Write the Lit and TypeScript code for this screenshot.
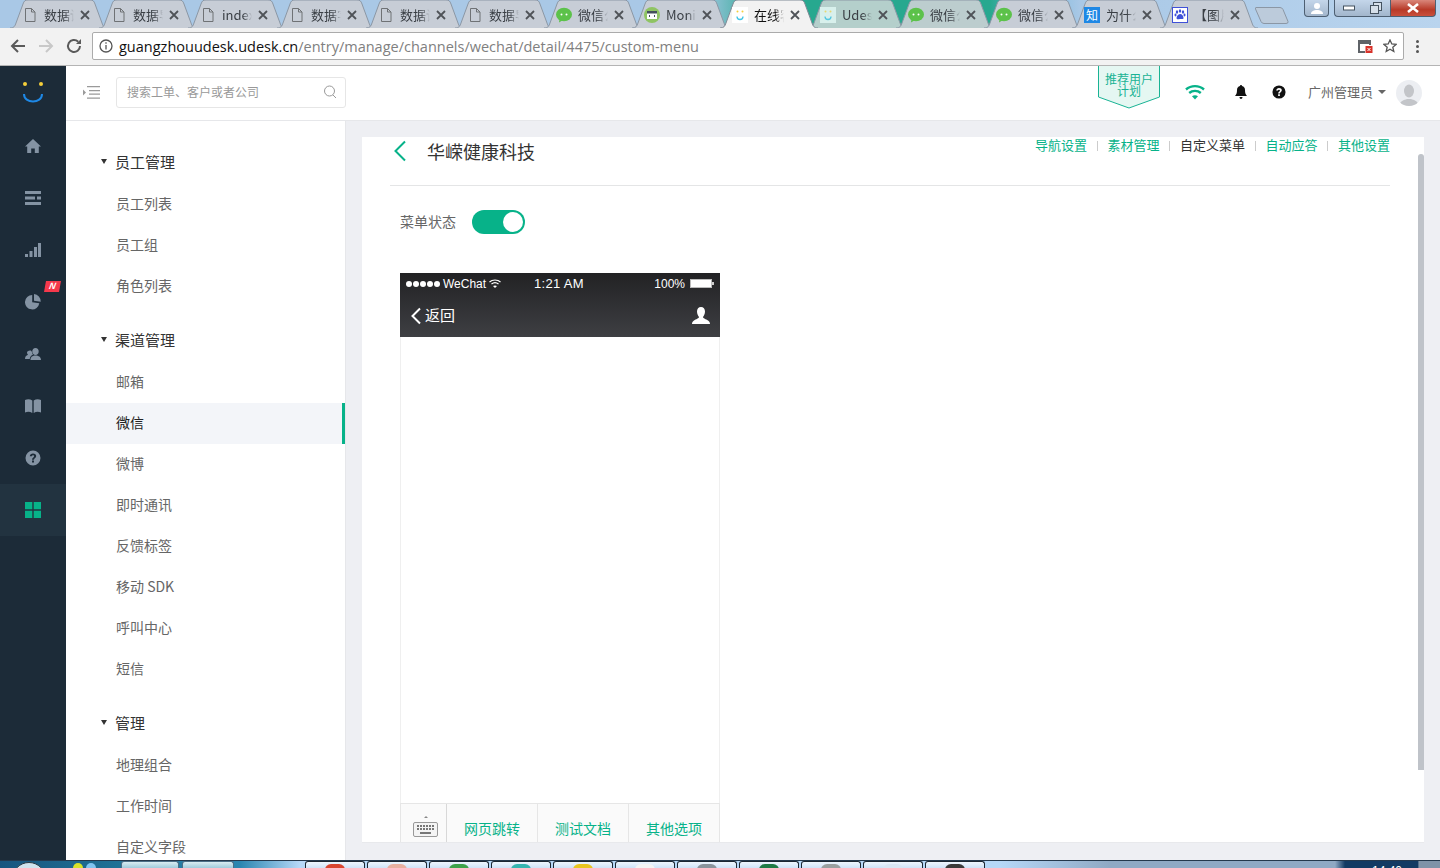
import { css, html, LitElement, svg, unsafeCSS } from "lit";
import { customElement } from "lit/decorators.js";

const CJK = unsafeCSS(`"Noto Sans CJK SC", "Liberation Sans", sans-serif`);

const page = svg`<svg viewBox="0 0 16 16" width="16" height="16" fill="none" stroke="#6f7275" stroke-width="1"><path d="M3.500 1.500h6l3.500 3.500v9.500h-9.500zM9.500 1.500v3.500h3.500"></path></svg>`;
const wechat = svg`<svg viewBox="0 0 16 16" width="16" height="16"><ellipse cx="8" cy="7.500" rx="8" ry="6.800" fill="#5cc24a"></ellipse><path d="M3.500 12l-.5 3.500 4-2.500z" fill="#5cc24a"></path><circle cx="5.500" cy="7.500" r="1" fill="#fff"></circle><circle cx="10.500" cy="7.500" r="1" fill="#fff"></circle></svg>`;
const mon = svg`<svg viewBox="0 0 16 16" width="16" height="16"><circle cx="8" cy="8" r="8" fill="#8fc463"></circle><rect x="3" y="4" width="10" height="8" fill="#fff"></rect><rect x="3" y="4" width="10" height="2.500" fill="#45505c"></rect><path d="M6 8l-1 1 1 1M10 8l1 1-1 1" stroke="#45505c" fill="none"></path></svg>`;
const smile = svg`<svg viewBox="0 0 16 16" width="16" height="16"><rect width="16" height="16" fill="#fff"></rect><circle cx="5.500" cy="4.500" r="1" fill="#f5cf3a"></circle><circle cx="10.500" cy="4.500" r="1" fill="#f5cf3a"></circle><path d="M5 9.500c0 4 6 4 6 0" stroke="#45c6e6" stroke-width="1.300" fill="none"></path></svg>`;
const smileTint = svg`<svg viewBox="0 0 16 16" width="16" height="16"><rect width="16" height="16" fill="#d8f0ec"></rect><circle cx="5.500" cy="4.500" r="1" fill="#e8d870"></circle><circle cx="10.500" cy="4.500" r="1" fill="#e8d870"></circle><path d="M5 9.500c0 4 6 4 6 0" stroke="#55c8e0" stroke-width="1.300" fill="none"></path></svg>`;
const zhihu = svg`<svg viewBox="0 0 16 16" width="16" height="16"><rect width="16" height="16" fill="#1e88e5"></rect><text x="8" y="12.500" font-size="12" text-anchor="middle" fill="#fff" font-family="Noto Sans CJK SC">知</text></svg>`;
const paw = svg`<svg viewBox="0 0 16 16" width="16" height="16"><rect x=".5" y=".5" width="15" height="15" fill="#fff" stroke="#3f51d8"></rect><g fill="#3f51d8"><ellipse cx="5" cy="5" rx="1.200" ry="1.700"></ellipse><ellipse cx="8" cy="4" rx="1.200" ry="1.700"></ellipse><ellipse cx="11" cy="5" rx="1.200" ry="1.700"></ellipse><ellipse cx="3.500" cy="8" rx="1" ry="1.400"></ellipse><ellipse cx="12.500" cy="8" rx="1" ry="1.400"></ellipse><path d="M8 7c-2 0-3.500 2.500-3.500 4s1.500 1.500 3.500 1 3.500 1 3.500-1S10 7 8 7z"></path></g></svg>`;

const tabs = [
  { icon: page, title: "数据说明" },
  { icon: page, title: "数据导入" },
  { icon: page, title: "index" },
  { icon: page, title: "数据字典" },
  { icon: page, title: "数据说明" },
  { icon: page, title: "数据导入" },
  { icon: wechat, title: "微信公众" },
  { icon: mon, title: "Monitor" },
  { icon: smile, title: "在线客服", cls: "active" },
  { icon: smileTint, title: "Udesk", cls: "tint" },
  { icon: wechat, title: "微信公众", cls: "tint2" },
  { icon: wechat, title: "微信公众" },
  { icon: zhihu, title: "为什么" },
  { icon: paw, title: "【图片】" },
];

const railIcons = [
  svg`<path d="M8 1L0 8.500h2.200V15h4v-4.500h3.600V15h4V8.500H16z"></path>`,
  svg`<path d="M0 1h16v3H0zM0 6.500h10v3H0zM12 6.500h4v3h-4zM0 12h16v3H0z"></path>`,
  svg`<path d="M0 12h3v3H0zM4.500 9h3v6h-3zM9 5h3v10H9zM13 1h3v14h-3z"></path>`,
  svg`<path d="M7.200 1a7.200 7.200 0 1 0 7.100 8.300L7.200 8.200zM9 0v6.700l6.700 1A7.500 7.500 0 0 0 9 0z"></path>`,
  svg`<path d="M10.500 2a3.200 3.200 0 0 1 3.200 3.500c0 2-1.400 3.500-3.200 3.500S7.300 7.500 7.300 5.500A3.200 3.200 0 0 1 10.500 2zM5 4.500c1 0 1.800.7 2 1.700.1 1 .5 2 1 2.600-1.800.7-3 1.800-3.300 4.200H0c0-2.500 1-3.500 3-4.300-.7-.6-1-1.400-1-2.200 0-1 1.200-2 3-2zM10.500 9.500c3 .2 5.500 1.300 5.500 4.500H5.500c0-3.200 2-4.300 5-4.500z"></path>`,
  svg`<path d="M0 2c2.500-1 5-1 7.300.5V15C5 13.500 2.500 13.500 0 14.500zM16 2c-2.500-1-5-1-7.300.5V15c2.300-1.500 4.800-1.500 7.300-.5z"></path>`,
  svg`<path fill-rule="evenodd" d="M8 .5a7.500 7.500 0 1 1 0 15 7.500 7.500 0 0 1 0-15zM7 10.500v2h2v-2zM8 3.500c-1.700 0-3 1-3.200 2.800h2c.1-.7.500-1 1.200-1s1.100.4 1.100.9c0 1.200-2.100 1.300-2.100 3.500h2c0-1.500 2.200-1.800 2.200-3.700 0-1.500-1.300-2.500-3.200-2.500z"></path>`,
  svg`<path d="M0 0h7.300v7.300H0zM8.700 0H16v7.300H8.700zM0 8.700h7.300V16H0zM8.700 8.700H16V16H8.700z"></path>`,
];

const groups = [
  { title: "员工管理", items: ["员工列表", "员工组", "角色列表"] },
  { title: "渠道管理", items: ["邮箱", "微信", "微博", "即时通讯", "反馈标签", "移动 SDK", "呼叫中心", "短信"] },
  { title: "管理", items: ["地理组合", "工作时间", "自定义字段"] },
];

const cardLinks = ["导航设置", "素材管理", "自定义菜单", "自动应答", "其他设置"];

const taskButtons = ["#d9452f", "#e8b0a0", "#3da24a", "#35b5b0", "#e8c520", "#f4f4f4", "#8a949c", "#1f7a45", "#9aa0a0", "#d8e6f4", "#3a3a3a"];

@customElement("app-root")
export class AppRoot extends LitElement {
  static override styles = css`
    :host {
      display: block;
      width: 1440px;
      height: 868px;
      overflow: hidden;
      font-family: ${CJK};
      background: #fff;
    }

    .window {
      display: flex;
      flex-direction: column;
      height: 868px;
    }

    /* browser chrome */
    .strip {
      display: flex;
      height: 28px;
      flex: none;
      padding-left: 4px;
      background: linear-gradient(90deg, #a9c8e6 0, #a9c8e6 700px, #27a88f 760px, #27a88f 990px, #6fb4d8 1030px, #a9c8e6 1080px, #b9d4ee 1440px);
    }

    .tab {
      position: relative;
      flex: none;
      width: 100px;
      height: 28px;
      margin-right: -12px;
      display: flex;
      align-items: center;
      padding: 1px 0 0 18px;
      box-sizing: border-box;
      font-size: 13px;
      color: #3a3f45;
    }

    .tab:nth-child(-n + 6) {
      margin-right: -11px;
    }

    .tab.active {
      z-index: 2;
      color: #111;
    }

    .tab-shape {
      position: absolute;
      left: 6px;
      top: 0;
      fill: #c7cdd6;
      stroke: #8b97a5;
    }

    .tab.active .tab-shape {
      fill: #f2f2f2;
      stroke: #7f8a96;
    }

    .tab.tint .tab-shape {
      fill: #b4cfcb;
    }

    .tab.tint2 .tab-shape {
      fill: #bccdce;
    }

    .tab-icon {
      position: relative;
      width: 16px;
      height: 16px;
      flex: none;
      margin-right: 6px;
    }

    .tab-title {
      position: relative;
      width: 30px;
      flex: none;
      overflow: hidden;
      white-space: nowrap;
      -webkit-mask-image: linear-gradient(90deg, #000 70%, transparent 100%);
      mask-image: linear-gradient(90deg, #000 70%, transparent 100%);
    }

    .tab-close {
      position: relative;
      margin-left: 6px;
      width: 10px;
      height: 10px;
      flex: none;
      stroke: #4f5358;
      stroke-width: 1.8;
    }

    .new-tab {
      flex: none;
      margin: 7px 0 0 13px;
      width: 34px;
      height: 17px;
    }

    .controls {
      display: flex;
      margin-left: auto;
      margin-right: 4px;
      height: 17px;
      gap: 5px;
    }

    .ctl {
      display: flex;
      align-items: center;
      justify-content: center;
      height: 17px;
      box-sizing: border-box;
      border: 1px solid #4d5f72;
      border-top: none;
      border-radius: 0 0 4px 4px;
      background: linear-gradient(#c4d6ea, #a2b6cc);
    }

    .ctl.user {
      width: 25px;
    }

    .ctl.pair {
      width: 56px;
      justify-content: space-around;
      border-right: none;
      border-radius: 0 0 0 4px;
    }

    .ctl.close {
      width: 46px;
      margin-left: -5px;
      background: linear-gradient(#d9867a, #b83a28 60%, #c9503c);
      border-radius: 0 0 4px 0;
    }

    .toolbar {
      display: flex;
      align-items: center;
      flex: none;
      height: 38px;
      box-sizing: border-box;
      padding: 0 0 1px 8px;
      background: #f2f2f2;
      border-bottom: 1px solid #b4b4b4;
    }

    .nav-btn {
      width: 20px;
      height: 20px;
      flex: none;
      margin-right: 8px;
    }

    .address {
      display: flex;
      align-items: center;
      width: 1312px;
      height: 28px;
      box-sizing: border-box;
      border: 1px solid #ababab;
      border-radius: 2px;
      background: #fff;
      padding: 0 6px 0 6px;
      font-family: "Open Sans", sans-serif;
      font-size: 14.5px;
      color: #808080;
      flex: none;
    }

    .address b {
      font-weight: 400;
      color: #111;
    }

    .address .info {
      margin-right: 6px;
      flex: none;
    }

    .address .right {
      margin-left: auto;
      display: flex;
      align-items: center;
      gap: 10px;
    }

    .dots {
      margin-left: 12px;
      width: 4px;
      display: flex;
      flex-direction: column;
      gap: 2px;
    }

    .dots i {
      display: block;
      width: 3px;
      height: 3px;
      border-radius: 50%;
      background: #555;
    }

    /* app */
    .app {
      display: flex;
      flex: 1;
      min-height: 0;
    }

    .rail {
      width: 66px;
      flex: none;
      display: flex;
      flex-direction: column;
      background: #1c2b38;
    }

    .logo {
      height: 54px;
      display: flex;
      align-items: center;
      justify-content: center;
    }

    .rail-item {
      position: relative;
      height: 52px;
      display: flex;
      align-items: center;
      justify-content: center;
      fill: #8493a3;
    }

    .rail-item.on {
      background: #223340;
      fill: #07b289;
    }

    .badge {
      position: absolute;
      left: 45px;
      top: 5px;
      width: 15px;
      height: 11px;
      background: #f5394c;
      color: #fff;
      font: italic 700 9px/11px "Liberation Sans", sans-serif;
      text-align: center;
      transform: skewX(-10deg);
    }

    .main {
      flex: 1;
      min-width: 0;
      display: flex;
      flex-direction: column;
    }

    .top {
      flex: none;
      height: 55px;
      box-sizing: border-box;
      display: flex;
      align-items: flex-start;
      border-bottom: 1px solid #e6e7ea;
      background: #fff;
    }

    .menu-btn {
      margin: 20px 0 0 17px;
      flex: none;
    }

    .search {
      width: 230px;
      height: 31px;
      margin: 11px 0 0 16px;
      box-sizing: border-box;
      flex: none;
      display: flex;
      align-items: center;
      justify-content: space-between;
      padding: 0 8px 2px 10px;
      border: 1px solid #e6e6e6;
      border-radius: 3px;
      font-size: 12px;
      color: #999;
    }

    .top-right {
      margin-left: auto;
      display: flex;
      align-items: center;
      height: 54px;
      padding-right: 18px;
    }

    .recommend {
      position: relative;
      width: 62px;
      height: 43px;
      margin: 0 25px 0 0;
      align-self: flex-start;
      flex: none;
      font-size: 12px;
      line-height: 12px;
      color: #19b394;
      text-align: center;
    }

    .recommend svg {
      position: absolute;
      left: 0;
      top: 0;
    }

    .recommend span {
      position: relative;
      display: block;
      padding-top: 7px;
    }

    .wifi {
      margin: 0 30px 2px 0;
    }

    .bell {
      margin: 0 25px 2px 0;
    }

    .help {
      margin: 0 22px 2px 0;
    }

    .user-name {
      font-size: 13px;
      color: #666;
      margin-bottom: 4px;
    }

    .caret {
      width: 0;
      height: 0;
      margin: 0 10px 2px 5px;
      border-left: 4px solid transparent;
      border-right: 4px solid transparent;
      border-top: 4px solid #666;
    }

    .avatar {
      width: 26px;
      height: 26px;
      border-radius: 50%;
      overflow: hidden;
      background: #eceef2;
      flex: none;
    }

    .body {
      flex: 1;
      min-height: 0;
      display: flex;
      background: #eeeff3;
    }

    .subnav {
      width: 280px;
      flex: none;
      box-sizing: border-box;
      padding-top: 22px;
      background: #fff;
      border-right: 1px solid #e6e7ea;
      overflow: hidden;
    }

    .group {
      margin-bottom: 14px;
    }

    .group-title {
      height: 41px;
      box-sizing: border-box;
      display: flex;
      align-items: center;
      padding: 0 0 4px 35px;
      font-size: 15px;
      color: #333;
    }

    .group-title::before {
      content: "";
      width: 0;
      height: 0;
      margin-right: 8px;
      border-left: 3.5px solid transparent;
      border-right: 3.5px solid transparent;
      border-top: 5px solid #333;
    }

    .item {
      height: 41px;
      box-sizing: border-box;
      display: flex;
      align-items: center;
      padding: 0 0 4px 50px;
      font-size: 14px;
      color: #666;
    }

    .item.on {
      background: #f3f5f9;
      color: #222;
      border-right: 3px solid #07b289;
    }

    .content {
      flex: 1;
      min-width: 0;
      padding: 16px 16px 17px 16px;
    }

    .card {
      display: flex;
      height: 100%;
      box-sizing: border-box;
      background: #fff;
      border: 1px solid #e8e9ec;
      border-width: 0 0 1px 0;
      overflow: hidden;
    }

    .card-main {
      flex: 1;
      min-width: 0;
      padding: 0 28px;
    }

    .card-head {
      height: 48px;
      display: flex;
      align-items: flex-start;
      border-bottom: 1px solid #e4e5e6;
    }

    .back {
      margin: 3px 0 0 3px;
      flex: none;
    }

    .card-title {
      margin: 1px 0 0 20px;
      font-size: 18px;
      line-height: 26px;
      color: #333;
    }

    .links {
      margin-left: auto;
      display: flex;
      align-items: center;
      font-size: 13px;
      line-height: 16px;
      color: #07b289;
    }

    .links span.cur {
      color: #333;
    }

    .links i {
      width: 1px;
      height: 10px;
      margin: 2px 9.75px 0;
      background: #ccc;
    }

    .switch-row {
      display: flex;
      align-items: center;
      margin: 24px 0 0 10px;
      font-size: 14px;
      color: #666;
    }

    .switch-label {
      margin-bottom: 3px;
    }

    .switch {
      position: relative;
      width: 53px;
      height: 24px;
      margin-left: 16px;
      border-radius: 12px;
      background: #07b289;
    }

    .switch::after {
      content: "";
      position: absolute;
      right: 2px;
      top: 2px;
      width: 20px;
      height: 20px;
      border-radius: 50%;
      background: #fff;
    }

    .phone {
      width: 320px;
      margin: 39px 0 0 10px;
      height: 580px;
      display: flex;
      flex-direction: column;
    }

    .phone-head {
      height: 64px;
      flex: none;
      color: #fff;
      background: linear-gradient(#222224, #3e3f43);
      font-family: "Liberation Sans", sans-serif;
    }

    .status {
      position: relative;
      display: flex;
      align-items: center;
      height: 21px;
      padding: 0 6px;
      font-size: 12px;
    }

    .status .sig {
      display: flex;
      gap: 1px;
      margin-right: 3px;
    }

    .status .sig i {
      display: block;
      width: 6px;
      height: 6px;
      border-radius: 50%;
      background: #fff;
    }

    .status .time {
      position: absolute;
      left: 134px;
      font-size: 13px;
      letter-spacing: 0.3px;
    }

    .status .batt {
      margin-left: auto;
      display: flex;
      align-items: center;
      gap: 5px;
    }

    .phone-nav {
      display: flex;
      align-items: center;
      height: 43px;
      padding: 0 10px;
      box-sizing: border-box;
      font-family: ${CJK};
      font-size: 15px;
    }

    .phone-nav svg:last-child {
      margin-left: auto;
    }

    .phone-nav span {
      margin: 0 0 2px 3px;
    }

    .phone-body {
      flex: 1;
      min-height: 0;
      box-sizing: border-box;
      border: 1px solid #efefef;
      border-width: 0 1px;
    }

    .phone-menu {
      flex: none;
      height: 50px;
      display: flex;
      box-sizing: border-box;
      border: 1px solid #e6e6e6;
      background: #fafafa;
      color: #07b289;
      font-size: 14px;
    }

    .kbd {
      width: 46px;
      flex: none;
      box-sizing: border-box;
      border-right: 1px solid #d8d8d8;
      padding: 11px 0 0 12px;
    }

    .phone-menu span {
      flex: 1;
      display: flex;
      align-items: center;
      justify-content: center;
      padding-bottom: 1px;
      border-right: 1px solid #e6e6e6;
    }

    .phone-menu span:last-child {
      border-right: none;
    }

    .scroll {
      width: 6px;
      height: 616px;
      margin: 17px 0 0 0;
      flex: none;
      border-radius: 3px 3px 0 0;
      background: #bfc3c9;
    }

    /* windows taskbar, only its top edge is in view */
    .taskbar {
      flex: none;
      height: 8px;
      box-sizing: border-box;
      display: flex;
      overflow: hidden;
      border-top: 1px solid #24384c;
      background: linear-gradient(90deg, #17557f 0, #1f7296 120px, #2a86b0 240px, #b6d8f8 300px, #b6d8f8 1000px, #8fa9c4 1110px, #8fa9c4 1335px, #123a63 1345px);
    }

    .orb {
      width: 34px;
      height: 34px;
      margin: 1px 0 0 12px;
      border-radius: 50%;
      background: #cfe3ee;
      border: 1px solid #2a3a44;
      box-sizing: border-box;
      flex: none;
    }

    .tray-dot {
      width: 10px;
      height: 10px;
      margin: 2px 3px 0 0;
      border-radius: 50%;
      flex: none;
      background: #d8e22a;
    }

    .tray-dot.first {
      margin-left: 27px;
    }

    .tray-dot.blue {
      background: #7fc4f0;
    }

    .pinned {
      width: 58px;
      margin-left: 3px;
      border: 1px solid #4b6f87;
      border-bottom: none;
      border-radius: 3px 3px 0 0;
      box-sizing: border-box;
      background: linear-gradient(#d9ecf2, #9fcbdc);
      flex: none;
    }

    .pinned.first {
      margin-left: 22px;
    }

    .pinned.narrow {
      width: 52px;
    }

    .task {
      width: 60px;
      margin-left: 2px;
      flex: none;
      box-sizing: border-box;
      display: flex;
      justify-content: center;
      padding-top: 2px;
      border: 1px solid #1b2733;
      border-bottom: none;
      border-radius: 3px 3px 0 0;
      background: linear-gradient(#eef6fe, #cfe3f8);
    }

    .task.first {
      margin-left: 71px;
    }

    .task i {
      display: block;
      width: 20px;
      height: 12px;
      border-radius: 6px 6px 0 0;
    }

    .clock {
      margin: 3px 0 0 auto;
      padding-right: 16px;
      font: 12px/14px "Liberation Sans", sans-serif;
      color: #fff;
    }

    .show-desktop {
      width: 22px;
      flex: none;
      box-sizing: border-box;
      border-left: 1px solid #54708c;
      background: #7f93a8;
    }
  `;

  private renderTab(t: (typeof tabs)[number]) {
    return html`
      <div class="tab ${t.cls ?? ""}">
        <svg class="tab-shape" width="98" height="28" viewBox="0 0 98 28">
          <path d="M0 28c4 0 5-2 6-5l7-19c1-3 2-4 5-4h62c3 0 4 1 5 4l7 19c1 3 2 5 6 5"></path>
        </svg>
        <span class="tab-icon">${t.icon}</span>
        <span class="tab-title">${t.title}</span>
        <svg class="tab-close" viewBox="0 0 10 10"><path d="M1 1l8 8M9 1l-8 8"></path></svg>
      </div>
    `;
  }

  private renderChrome() {
    return html`
      <div class="strip">
        ${tabs.map((t) => this.renderTab(t))}
        <svg class="new-tab" viewBox="0 0 34 17">
          <path d="M1 .5h24q2 0 3 2l5 12q.5 2-2 2H9q-2 0-3-2L.5 2q-.5-1.500.5-1.500z" fill="#bccbdb" stroke="#8b97a5"></path>
        </svg>
        <div class="controls">
          <div class="ctl user">
            <svg width="12" height="11" viewBox="0 0 12 11" fill="#fff"><circle cx="6" cy="3" r="3"></circle><path d="M0 11c0-3 3-4 6-4s6 1 6 4z"></path></svg>
          </div>
          <div class="ctl pair">
            <svg width="12" height="6" viewBox="0 0 12 6"><rect x=".5" y="1" width="11" height="4" fill="#fff" stroke="#44525f"></rect></svg>
            <svg width="12" height="12" viewBox="0 0 12 12" fill="#d5dfe9" stroke="#44525f"><rect x="3.500" y=".5" width="8" height="8"></rect><rect x=".5" y="3.500" width="8" height="8"></rect></svg>
          </div>
          <div class="ctl close">
            <svg width="14" height="10" viewBox="0 0 14 10"><path d="M2 1l10 8M12 1L2 9" stroke="#fff" stroke-width="2.6"></path></svg>
          </div>
        </div>
      </div>
      <div class="toolbar">
        <svg class="nav-btn" viewBox="0 0 20 20" fill="none" stroke="#5a5a5a" stroke-width="2"><path d="M17 10H4M10 4l-6 6 6 6"></path></svg>
        <svg class="nav-btn" viewBox="0 0 20 20" fill="none" stroke="#c8c8c8" stroke-width="2"><path d="M3 10h13M10 4l6 6-6 6"></path></svg>
        <svg class="nav-btn" viewBox="0 0 20 20" fill="none" stroke="#5a5a5a" stroke-width="2"><path d="M16 10a6 6 0 1 1-1.800-4.300"></path><path d="M17 3v5h-5z" fill="#5a5a5a" stroke="none"></path></svg>
        <div class="address">
          <svg class="info" width="14" height="14" viewBox="0 0 14 14" fill="none" stroke="#555" stroke-width="1.3"><circle cx="7" cy="7" r="6"></circle><path d="M7 6v4.500M7 3.300v1.500"></path></svg>
          <span><b>guangzhouudesk.udesk.cn</b>/entry/manage/channels/wechat/detail/4475/custom-menu</span>
          <div class="right">
            <svg width="16" height="15" viewBox="0 0 16 15"><path d="M1 1h13v5h-2V5H3v7h5v2H1z" fill="#5f6368"></path><rect x="8.500" y="7" width="7" height="7" fill="#d8322a"></rect><path d="M10.500 9l3 3M13.500 9l-3 3" stroke="#fff"></path></svg>
            <svg width="14" height="14" viewBox="0 0 14 14" fill="none" stroke="#555" stroke-width="1.3"><path d="M7 1l1.800 4 4.200.4-3.200 2.800 1 4.300L7 10.200l-3.800 2.300 1-4.300L1 5.400 5.200 5z"></path></svg>
          </div>
        </div>
        <div class="dots"><i></i><i></i><i></i></div>
      </div>
    `;
  }

  private renderRail() {
    return html`
      <nav class="rail">
        <div class="logo">
          <svg width="22" height="24" viewBox="0 0 22 24" fill="none">
            <circle cx="3" cy="3" r="2" fill="#f5cf3a"></circle>
            <circle cx="19" cy="3" r="2" fill="#f5cf3a"></circle>
            <path d="M2 13c0 10 18 10 18 0" stroke="#1e88e5" stroke-width="2"></path>
          </svg>
        </div>
        <div>
          ${railIcons.map(
            (icon, i) => html`
              <div class="rail-item ${i === 7 ? "on" : ""}">
                <svg width="16" height="16" viewBox="0 0 16 16">${icon}</svg>
                ${i === 3 ? html`<span class="badge">N</span>` : ""}
              </div>
            `,
          )}
        </div>
      </nav>
    `;
  }

  private renderTop() {
    return html`
      <header class="top">
        <svg class="menu-btn" width="17" height="13" viewBox="0 0 17 13" fill="#9a9a9a">
          <path d="M4 0h13v1.300H4zM6 4h11v1.300H6zM6 7.500h11v1.300H6zM4 11.500h13v1.300H4zM0 3.500l3 3-3 3z"></path>
        </svg>
        <div class="search">
          <span>搜索工单、客户或者公司</span>
          <svg width="14" height="14" viewBox="0 0 14 14" fill="none" stroke="#999" stroke-width="1"><circle cx="6.500" cy="6" r="5"></circle><path d="M10 10l3 3"></path></svg>
        </div>
        <div class="top-right">
          <div class="recommend">
            <svg width="62" height="43" viewBox="0 0 62 43"><path d="M.5 0v31L31 42l30.500-11V0" fill="#e5f7f2" stroke="#19b394"></path></svg>
            <span>推荐用户<br />计划</span>
          </div>
          <svg class="wifi" width="20" height="16" viewBox="0 0 20 16" fill="none" stroke="#07b289" stroke-width="2.4"><path d="M1 5.500c5-4.500 13-4.500 18 0M4.200 9c3.200-2.800 8.400-2.800 11.600 0"></path><path d="M10 15.500l-3-3.200c1.700-1.300 4.300-1.300 6 0z" fill="#07b289" stroke="none"></path></svg>
          <svg class="bell" width="12" height="14" viewBox="0 0 12 14" fill="#111"><path d="M6 0c.7 0 1 .5 1 1 2 .5 3 2 3 4 0 3 .5 4.500 2 6H0c1.500-1.500 2-3 2-6 0-2 1-3.500 3-4 0-.5.3-1 1-1zM4.500 12h3c0 1-.7 2-1.500 2s-1.500-1-1.500-2z"></path></svg>
          <svg class="help" width="14" height="14" viewBox="0 0 16 16" fill="#111">
            <path fill-rule="evenodd" d="M8 .5a7.500 7.500 0 1 1 0 15 7.500 7.500 0 0 1 0-15zM7 10.500v2h2v-2zM8 3.500c-1.700 0-3 1-3.200 2.800h2c.1-.7.500-1 1.200-1s1.100.4 1.100.9c0 1.200-2.100 1.300-2.100 3.500h2c0-1.500 2.200-1.800 2.200-3.700 0-1.500-1.300-2.500-3.200-2.500z"></path>
          </svg>
          <span class="user-name">广州管理员</span>
          <span class="caret"></span>
          <div class="avatar">
            <svg width="26" height="26" viewBox="0 0 26 26" fill="#c3c5c9"><ellipse cx="13" cy="11" rx="5" ry="6.500"></ellipse><path d="M3 26c1-5 5-6 8-7h4c3 1 7 2 8 7z"></path></svg>
          </div>
        </div>
      </header>
    `;
  }

  private renderSubnav() {
    return html`
      <aside class="subnav">
        ${groups.map(
          (g) => html`
            <div class="group">
              <div class="group-title">${g.title}</div>
              ${g.items.map((it) => html`<div class="item ${it === "微信" ? "on" : ""}">${it}</div>`)}
            </div>
          `,
        )}
      </aside>
    `;
  }

  private renderPhone() {
    return html`
      <div class="phone">
        <div class="phone-head">
          <div class="status">
            <span class="sig"><i></i><i></i><i></i><i></i><i></i></span>
            <span>WeChat</span>
            <svg style="margin-left:3px" width="12" height="9" viewBox="0 0 12 9" fill="none" stroke="#fff" stroke-width="1.2"><path d="M.5 3c3-2.700 8-2.700 11 0M2.500 5c2-1.700 5-1.700 7 0"></path><path d="M6 9L4 7c1-.8 3-.8 4 0z" fill="#fff" stroke="none"></path></svg>
            <span class="time">1:21 AM</span>
            <span class="batt">
              100%
              <svg width="24" height="9" viewBox="0 0 24 9"><rect x=".5" y=".5" width="21" height="8" fill="#fff" stroke="#bbb"></rect><rect x="22" y="3" width="2" height="3" fill="#ccc"></rect></svg>
            </span>
          </div>
          <div class="phone-nav">
            <svg width="12" height="18" viewBox="0 0 12 18" fill="none" stroke="#fff" stroke-width="2"><path d="M10 1.500L2.500 9l7.500 7.500"></path></svg>
            <span>返回</span>
            <svg width="18" height="18" viewBox="0 0 18 18" fill="#fff"><path d="M9 0c2.500 0 4 2 4 4.500S11.800 9 11 10c0 1.500 3 2 5 3.500 1.300 1 2 2 2 3.500H0c0-1.500.7-2.500 2-3.500C4 12 7 11.500 7 10c-.8-1-2-3-2-5.500S6.500 0 9 0z"></path></svg>
          </div>
        </div>
        <div class="phone-body"></div>
        <div class="phone-menu">
          <div class="kbd">
            <svg width="26" height="22" viewBox="0 0 26 22" fill="none">
              <path d="M11 3l2-2 2 2z" fill="#888"></path>
              <rect x=".5" y="7.500" width="24" height="14" rx="1.500" fill="#f4f4f4" stroke="#999"></rect>
              <path d="M4 11h17M4 14h17" stroke="#777" stroke-width="2" stroke-dasharray="2 1"></path>
              <path d="M7 18h11" stroke="#777" stroke-width="2"></path>
            </svg>
          </div>
          <span>网页跳转</span>
          <span>测试文档</span>
          <span>其他选项</span>
        </div>
      </div>
    `;
  }

  private renderCard() {
    return html`
      <section class="content">
        <div class="card">
          <div class="card-main">
            <div class="card-head">
              <svg class="back" width="14" height="22" viewBox="0 0 14 22" fill="none" stroke="#07b289" stroke-width="2"><path d="M12 1.500L2.500 11l9.500 9.500"></path></svg>
              <div class="card-title">华嵘健康科技</div>
              <div class="links">
                ${cardLinks.map(
                  (l, i) => html`
                    ${i > 0 ? html`<i></i>` : ""}
                    <span class=${l === "自定义菜单" ? "cur" : ""}>${l}</span>
                  `,
                )}
              </div>
            </div>
            <div class="switch-row"><span class="switch-label">菜单状态</span><div class="switch"></div></div>
            ${this.renderPhone()}
          </div>
          <div class="scroll"></div>
        </div>
      </section>
    `;
  }

  override render() {
    return html`
      <div class="window">
        ${this.renderChrome()}
        <div class="app">
          ${this.renderRail()}
          <div class="main">
            ${this.renderTop()}
            <div class="body">
              ${this.renderSubnav()}
              ${this.renderCard()}
            </div>
          </div>
        </div>
        <footer class="taskbar">
          <div class="orb"></div>
          <div class="tray-dot first"></div>
          <div class="tray-dot blue"></div>
          <div class="pinned first"></div>
          <div class="pinned narrow"></div>
          ${taskButtons.map(
            (c, i) => html`<div class="task ${i === 0 ? "first" : ""}"><i style="background:${c}"></i></div>`,
          )}
          <div class="clock">14:40</div>
          <div class="show-desktop"></div>
        </footer>
      </div>
    `;
  }
}

declare global {
  interface HTMLElementTagNameMap {
    "app-root": AppRoot;
  }
}
